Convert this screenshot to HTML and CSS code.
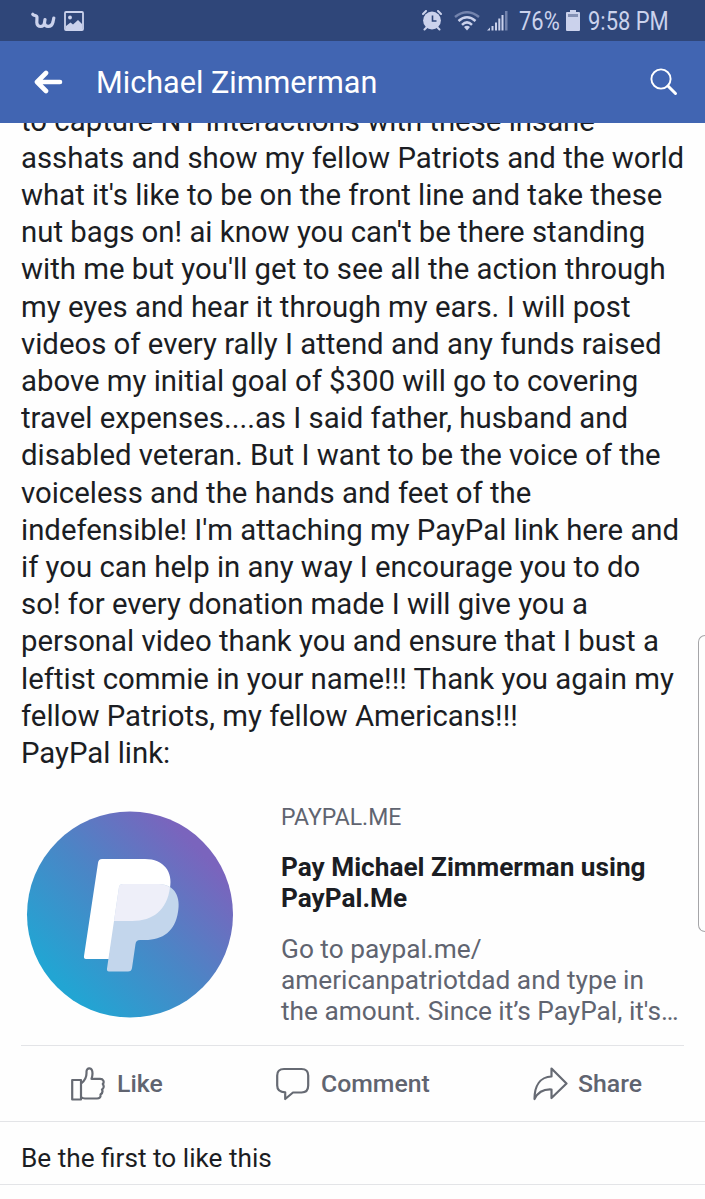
FILE: index.html
```
<!DOCTYPE html>
<html lang="en">
<head>
  <meta charset="UTF-8">
  <title>Michael Zimmerman</title>
  <link rel="stylesheet" href="styles.css">
</head>
<body>

  <div class="status-bar">
    <div class="status-left">
      <svg class="wish-icon" width="25" height="18" viewBox="0 0 25 18">
        <path d="M1.800 2.300 C3.500 4 6 3 6 5.500 L5.800 10.500 C5.800 15.800 13.500 15.800 13.500 10.500 L14 7.500 M13.500 10.500 C13.500 15.800 20.500 15.800 22 10 L22.800 6"/>
      </svg>
      <svg width="20" height="20" viewBox="0 0 20 20">
        <rect x="1" y="1" width="18" height="18" rx="1" fill="none" stroke="#cbd2ec" stroke-width="1.800"/>
        <circle cx="6" cy="6.500" r="1.900" fill="#cbd2ec"/>
        <path d="M2 15 L6.500 11.500 L9 13.500 L14 9 L18 13 V18 H2 Z" fill="#cbd2ec"/>
      </svg>
    </div>
    <div class="status-right">
      <svg class="alarm" width="20" height="21" viewBox="0 0 20 21">
        <circle cx="10" cy="10.500" r="8.900" fill="#cbd2ec"/>
        <path d="M1 4 L4 1 M19 4 L16 1 M2.500 19.500 L5 17 M17.500 19.500 L15 17" stroke="#cbd2ec" stroke-width="2" stroke-linecap="round"/>
        <path d="M10.500 5.500 V11 H14.500" fill="none" stroke="#2f4679" stroke-width="1.600"/>
      </svg>
      <svg class="wifi" width="26" height="20" viewBox="0 0 26 20">
        <g fill="none" stroke="#cbd2ec" stroke-width="2.500">
          <path d="M1 6 Q13 -3.500 25 6" stroke="#7383ad"/>
          <path d="M4.500 10 Q13 2.500 21.500 10"/>
          <path d="M8 13.800 Q13 9 18 13.800"/>
        </g>
        <path d="M10 16 Q13 13.500 16 16 L13 19.500 Z" fill="#cbd2ec"/>
      </svg>
      <svg class="signal" width="21" height="21" viewBox="0 0 21 21">
        <g fill="#cbd2ec">
          <path d="M0 20.500 L3 17.500 V20.500 Z"/>
          <rect x="4.500" y="16" width="2" height="4.500"/>
          <rect x="8" y="12.500" width="2" height="8"/>
          <rect x="11.300" y="8.500" width="2" height="12"/>
          <rect x="14.500" y="5" width="2" height="15.500"/>
          <rect x="18" y="1" width="2.500" height="19.500" fill="#7383ad"/>
        </g>
      </svg>
      <span class="percent">76%</span>
      <svg class="battery" width="14" height="21" viewBox="0 0 14 21">
        <path d="M4 0 H10 V2 H13 Q14 2 14 3 V20 Q14 21 13 21 H1 Q0 21 0 20 V3 Q0 2 1 2 H4 Z" fill="#cbd2ec"/>
        <rect x="2" y="4" width="10" height="3" fill="#8390b4"/>
      </svg>
      <span class="clock">9:58 PM</span>
    </div>
  </div>

  <header class="nav-bar">
    <svg class="back" width="29" height="24" viewBox="0 0 29 24">
      <path d="M12 3 L3 12 L12 21 M3.500 12 H26" fill="none" stroke="#fff" stroke-width="4.600" stroke-linecap="round" stroke-linejoin="round"/>
    </svg>
    <h1>Michael Zimmerman</h1>
    <svg class="search" width="28" height="28" viewBox="0 0 28 28">
      <circle cx="11" cy="11" r="9.600" fill="none" stroke="#fff" stroke-width="1.900"/>
      <path d="M18 18 L25.500 25.500" stroke="#fff" stroke-width="3" stroke-linecap="round"/>
    </svg>
  </header>

  <main class="post">
    <p class="post-text">to capture NY interactions with these insane<br>
      asshats and show my fellow Patriots and the world<br>
      what it's like to be on the front line and take these<br>
      nut bags on! ai know you can't be there standing<br>
      with me but you'll get to see all the action through<br>
      my eyes and hear it through my ears. I will post<br>
      videos of every rally I attend and any funds raised<br>
      above my initial goal of $300 will go to covering<br>
      travel expenses....as I said father, husband and<br>
      disabled veteran. But I want to be the voice of the<br>
      voiceless and the hands and feet of the<br>
      indefensible! I'm attaching my PayPal link here and<br>
      if you can help in any way I encourage you to do<br>
      so! for every donation made I will give you a<br>
      personal video thank you and ensure that I bust a<br>
      leftist commie in your name!!! Thank you again my<br>
      fellow Patriots, my fellow Americans!!!<br>
      PayPal link:</p>

    <div class="link-card">
      <svg class="link-logo" width="208" height="208" viewBox="0 0 208 208">
        <defs>
          <linearGradient id="circleFill" x1="0.180" y1="0.850" x2="0.850" y2="0.200">
            <stop offset="0" stop-color="#22a5d3"/>
            <stop offset="0.500" stop-color="#4a86c6"/>
            <stop offset="1" stop-color="#7a64bd"/>
          </linearGradient>
        </defs>
        <circle cx="104" cy="103.500" r="103" fill="url(#circleFill)"/>
        <path d="M76 48 H119 C138 48 147 61 144 77 C141 99 127 110 106 110 H89 L83 148 H60 Q57.500 148 58 145 L72 52 Q72.500 48 76 48 Z" fill="#fff"/>
        <path d="M97 73 H133 C149 73 155 87 152 101 C149 120 137 129 119 129 H114 Q110 129 109.500 133 L106 157 Q105.500 160.500 102 160.500 H83 Q80.500 160.500 81 157.500 L93 76 Q93.500 73 97 73 Z" fill="#c3d6ec"/>
        <path d="M97 73 H133 Q139 73 144 76.500 C141 99 127 110 106 110 H88 L93 76 Q93.500 73 97 73 Z" fill="#eeeff9"/>
      </svg>
      <div class="link-info">
        <div class="link-domain">PAYPAL.ME</div>
        <div class="link-title">Pay Michael Zimmerman using<br>PayPal.Me</div>
        <div class="link-description">Go to paypal.me/<br>americanpatriotdad and type in<br>the amount. Since it’s PayPal, it's…</div>
      </div>
    </div>
  </main>

  <div class="actions">
    <div class="action like">
      <svg width="34" height="34" viewBox="0 0 34 34">
        <path d="M1.200 13 H10 V32.500 H1.200 Z M10 16.500 C13.500 14 15.800 10.500 15.500 5 C15.300 0 21.500 0 21.500 6.500 C21.500 9 21 10.500 20.500 11.800 H29 C32.500 11.800 33.500 15 31.800 17 C33.300 19 32.800 21.500 31 22.500 C32 24.500 31 26.500 29.500 27.500 C30 30 28.500 31.500 26 31.500 H14 Q11.500 31.500 10 30"/>
      </svg>
      <span>Like</span>
    </div>
    <div class="action comment">
      <svg width="34" height="34" viewBox="0 0 34 34">
        <path d="M8 2 H25.500 Q32.200 2 32.200 8.500 V18.500 Q32.200 25.500 25.500 25.500 H17 L9.200 32 V25.300 Q1.200 25 1.200 18.500 V8.500 Q1.200 2 8 2 Z"/>
      </svg>
      <span>Comment</span>
    </div>
    <div class="action share">
      <svg width="35" height="34" viewBox="0 0 35 34">
        <path d="M18.500 1.500 L33.500 16.500 L18.500 31 V22.500 C10.500 22 5 25 1.500 32 C1.500 19 7 10 18.500 9.500 Z"/>
      </svg>
      <span>Share</span>
    </div>
  </div>

  <div class="likes">Be the first to like this</div>

  <div class="edge-handle"></div>

</body>
</html>
```

FILE: styles.css
```
* {
  box-sizing: border-box;
}

body {
  margin: 0;
  height: 1199px;
  display: flex;
  flex-direction: column;
  overflow: hidden;
  font-family: Roboto, sans-serif;
  background: #fefefe;
  color: #1b1d23;
}

svg {
  display: block;
  flex-shrink: 0;
}

.status-bar {
  height: 41px;
  flex-shrink: 0;
  display: flex;
  justify-content: space-between;
  padding: 0 35px 0 31px;
  background: #2f4679;
  color: #cbd2ec;
  font-size: 25.5px;
  line-height: 41px;
}

.status-left,
.status-right {
  display: flex;
  align-items: center;
}

.status-left {
  gap: 8px;
}

.wish-icon path {
  fill: none;
  stroke: #cbd2ec;
  stroke-width: 3.2;
  stroke-linecap: round;
  stroke-linejoin: round;
}

.wifi {
  margin-left: 12px;
}

.signal {
  margin-left: 7px;
}

.percent {
  width: 40px;
  margin-left: 11px;
}

.battery {
  margin-left: 7px;
}

.clock {
  width: 82px;
  margin-left: 8px;
}

/* condensed digits */
.percent,
.clock {
  padding-top: 2px;
  white-space: nowrap;
  transform: scaleX(0.86);
  transform-origin: left;
}

.nav-bar {
  height: 82px;
  flex-shrink: 0;
  display: flex;
  align-items: center;
  padding: 0 27px 0 34px;
  background: #4165b2;
  color: #fff;
}

.nav-bar h1 {
  flex: 1;
  margin: 1px 0 0 33px;
  font-size: 30.6px;
  font-weight: 400;
}

.post {
  height: 923px;
  flex-shrink: 0;
  margin: 0 21px;
  border-bottom: 1px solid #e3e4e7;
  overflow: hidden;
}

.post-text {
  margin: -20.5px 0 0;
  font-size: 29.35px;
  line-height: 37.2px;
  white-space: nowrap;
}

.link-card {
  display: flex;
  gap: 47px;
  margin: 39px 0 0 5px;
}

.link-info {
  margin-top: -8px;
  white-space: nowrap;
}

.link-domain {
  font-size: 23px;
  line-height: 30px;
  color: #606470;
}

.link-title {
  margin-top: 19px;
  font-size: 26.2px;
  font-weight: 700;
  line-height: 31px;
}

.link-description {
  margin-top: 20px;
  font-size: 26.25px;
  line-height: 31px;
  color: #606470;
}

.actions {
  height: 76px;
  flex-shrink: 0;
  display: flex;
  border-bottom: 1px solid #e3e4e7;
  color: #606470;
  font-size: 24.8px;
  font-weight: 500;
}

.action {
  display: flex;
  align-items: center;
  gap: 11px;
}

.action svg {
  fill: none;
  stroke: #666a73;
  stroke-width: 2.2;
  stroke-linejoin: round;
}

.like {
  width: 205px;
  gap: 12px;
  padding-left: 71px;
}

.comment {
  width: 257px;
  padding-left: 71px;
}

.share {
  padding-left: 71px;
}

.share svg {
  margin-right: -1px;
}

.likes {
  height: 63px;
  flex-shrink: 0;
  padding-left: 21px;
  border-bottom: 1px solid #e3e4e7;
  font-size: 26.2px;
  line-height: 73px;
}

/* edge panel handle of the phone, lies over the page */
.edge-handle {
  position: absolute;
  top: 635px;
  right: 0;
  width: 7px;
  height: 297px;
  border: 1px solid #a5a5a8;
  border-right: none;
  border-radius: 8px 0 0 8px;
}
```
